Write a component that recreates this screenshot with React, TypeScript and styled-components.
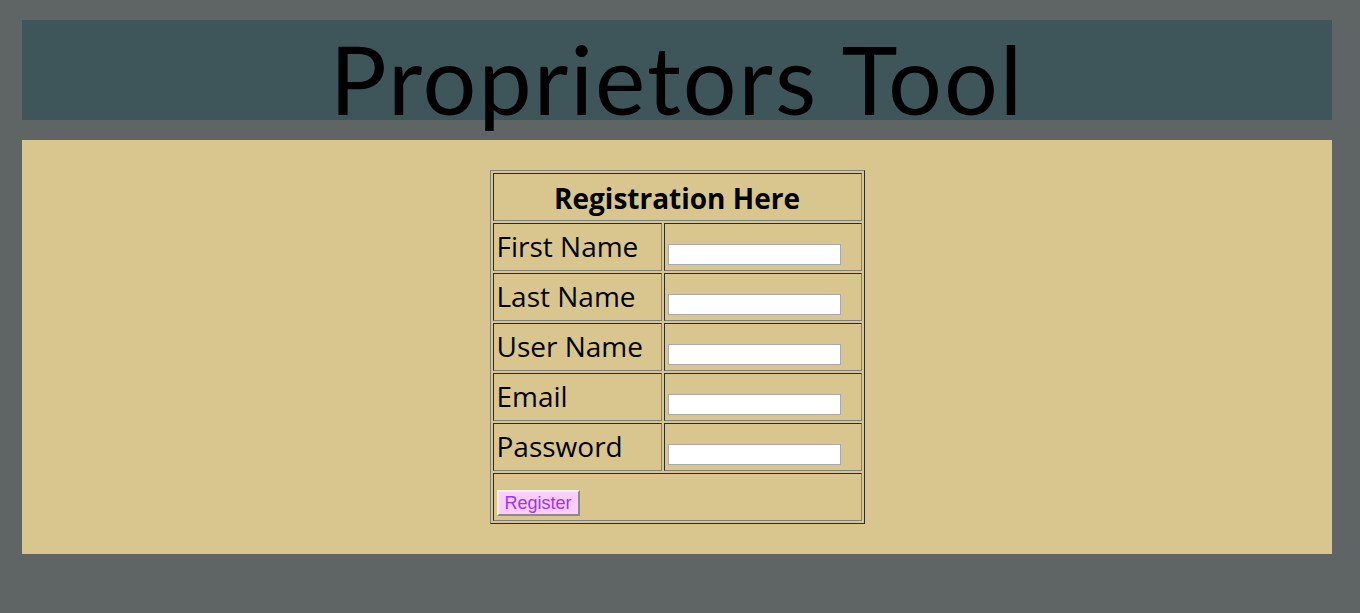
import React from 'react';
import styled, { createGlobalStyle } from 'styled-components';

const fields = ['First Name', 'Last Name', 'User Name', 'Email', 'Password'];

const App: React.FC = () => {
  return (
    <>
      <GlobalStyle />
      <Page>
        <Header>
          <Title>Proprietors Tool</Title>
        </Header>
        <Content>
          <FormTable>
            <tbody>
              <tr>
                <HeadCell colSpan={2}>Registration Here</HeadCell>
              </tr>
              {fields.map((label) => (
                <tr key={label}>
                  <LabelCell>{label}</LabelCell>
                  <InputCell>
                    <TextInput type={label === 'Password' ? 'password' : 'text'} />
                  </InputCell>
                </tr>
              ))}
              <tr>
                <ButtonCell colSpan={2}>
                  <RegisterButton>Register</RegisterButton>
                </ButtonCell>
              </tr>
            </tbody>
          </FormTable>
        </Content>
      </Page>
    </>
  );
};

export default App;

const GlobalStyle = createGlobalStyle`
  html, body {
    margin: 0;
    padding: 0;
    background: #5f6564;
  }
`;

const Page = styled.div`
  width: 1360px;
  height: 613px;
  padding: 20px 28px 0 22px;
  box-sizing: border-box;
  display: flex;
  flex-direction: column;
  gap: 20px;
`;

const Header = styled.div`
  height: 100px;
  background: #3e5659;
  display: flex;
  justify-content: center;
  overflow: visible;
`;

const Title = styled.h1`
  margin: -8px 0 0;
  font-family: 'Lato', sans-serif;
  font-weight: 400;
  font-size: 95px;
  letter-spacing: 2px;
  line-height: 132px;
  color: #000;
  white-space: nowrap;
`;

const Content = styled.div`
  height: 414px;
  background: #d9c68e;
  padding: 30px 0 0;
  box-sizing: border-box;
  display: flex;
  justify-content: center;
`;

const FormTable = styled.table`
  border: 1px solid;
  border-color: #808080 #2b2b2b #2b2b2b #808080;
  border-spacing: 2px;
  align-self: flex-start;
  width: 375px;
  font-family: 'Open Sans', 'Noto Sans', sans-serif;
  font-size: 28px;
  color: #000;
`;

const Cell = styled.td`
  border: 1px solid;
  border-color: #2b2b2b #808080 #808080 #2b2b2b;
  height: 48px;
  box-sizing: border-box;
  vertical-align: top;
  padding: 0 0 0 3px;
`;

const HeadCell = styled(Cell).attrs({ as: 'th' })`
  font-weight: 700;
  text-align: center;
  padding: 5px 0 0;
  line-height: 38px;
`;

const LabelCell = styled(Cell)`
  width: 169px;
  padding-top: 3px;
  line-height: 38px;
  white-space: nowrap;
`;

const InputCell = styled(Cell)`
  padding-top: 20px;
`;

const TextInput = styled.input`
  display: block;
  width: 173px;
  height: 21px;
  box-sizing: border-box;
  border: 1px solid #a9a9a9;
  background: #fff;
  padding: 1px 2px;
  margin: 0;
`;

const ButtonCell = styled(Cell)`
  padding-top: 16px;
`;

const RegisterButton = styled.button`
  display: block;
  width: 83px;
  height: 26px;
  box-sizing: border-box;
  background: #ffccff;
  color: #9933ff;
  font-family: 'Liberation Sans', Arial, sans-serif;
  font-size: 18px;
  padding: 0;
  border: 2px solid;
  border-color: #f0f0f0 #8a8a8a #8a8a8a #f0f0f0;
  line-height: 20px;
`;
